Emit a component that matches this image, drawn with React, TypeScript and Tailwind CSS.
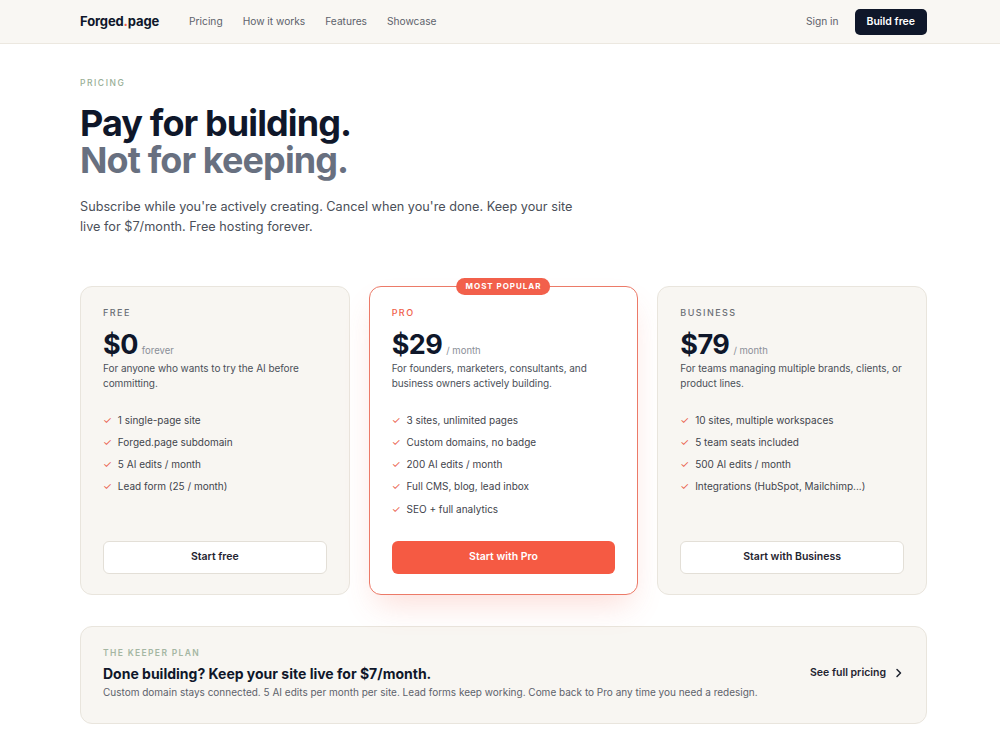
const FONT = "font-['Inter','Liberation_Sans',sans-serif]";

type Plan = {
  name: string;
  price: string;
  unit: string;
  desc: string;
  features: string[];
  cta: string;
  featured?: boolean;
};

const PLANS: Plan[] = [
  {
    name: "Free",
    price: "$0",
    unit: "forever",
    desc: "For anyone who wants to try the AI before committing.",
    features: ["1 single-page site", "Forged.page subdomain", "5 AI edits / month", "Lead form (25 / month)"],
    cta: "Start free",
  },
  {
    name: "Pro",
    price: "$29",
    unit: "/ month",
    desc: "For founders, marketers, consultants, and business owners actively building.",
    features: [
      "3 sites, unlimited pages",
      "Custom domains, no badge",
      "200 AI edits / month",
      "Full CMS, blog, lead inbox",
      "SEO + full analytics",
    ],
    cta: "Start with Pro",
    featured: true,
  },
  {
    name: "Business",
    price: "$79",
    unit: "/ month",
    desc: "For teams managing multiple brands, clients, or product lines.",
    features: [
      "10 sites, multiple workspaces",
      "5 team seats included",
      "500 AI edits / month",
      "Integrations (HubSpot, Mailchimp...)",
    ],
    cta: "Start with Business",
  },
];

function PlanCard({ plan }: { plan: Plan }) {
  const featured = plan.featured;
  return (
    <div
      className={[
        "relative flex flex-col rounded-[12px] border px-[22px] pt-[20px] pb-[20px]",
        featured
          ? "border-[#ec7a68] bg-white shadow-[0_16px_32px_-8px_rgba(240,96,74,0.22)]"
          : "border-[#e9e5dd] bg-[#f8f6f2]",
      ].join(" ")}
    >
      {featured && (
        <div className="absolute -top-[9px] left-1/2 -translate-x-1/2 rounded-full bg-[#f2604b] px-[9px] py-[3px] text-[8px] font-bold uppercase leading-[11px] tracking-[0.12em] text-white">
          Most popular
        </div>
      )}
      <div
        className={[
          "text-[9px] font-medium uppercase leading-[12px] tracking-[0.16em]",
          featured ? "text-[#f0604a]" : "text-[#6b6f76]",
        ].join(" ")}
      >
        {plan.name}
      </div>
      <div className="mt-[10px] flex items-baseline gap-[4px]">
        <span className="text-[27px] font-bold leading-[32px] tracking-[-0.02em] text-[#0f172a]">{plan.price}</span>
        <span className="text-[9.5px] text-[#8a8f98]">{plan.unit}</span>
      </div>
      <p className="-mr-[4px] text-[10px] leading-[15px] tracking-[-0.005em] text-[#4b5059]">{plan.desc}</p>
      <ul className="mt-[22px] flex flex-col gap-[7.2px]">
        {plan.features.map((f) => (
          <li key={f} className="flex items-center gap-[6px] text-[10px] leading-[15px] text-[#3f444c]">
            <span className="text-[10px] text-[#ea5b48]">✓</span>
            {f}
          </li>
        ))}
      </ul>
      <div className="mt-auto pt-[24px]">
        <button
          type="button"
          className={[
            "h-[33px] w-full rounded-[6px] text-[10.5px] font-semibold",
            featured
              ? "bg-[#f55a43] text-white"
              : "border border-[#e3dfd7] bg-white text-[#1f2430]",
          ].join(" ")}
        >
          {plan.cta}
        </button>
      </div>
    </div>
  );
}

export default function App() {
  return (
    <div className={`${FONT} min-h-screen bg-white`}>
      {/* Top nav */}
      <header className="flex h-[44px] items-center border-b border-[#ece8e0] bg-[#f9f7f3] pl-[80px] pr-[73px]">
        <div className="text-[13px] font-bold tracking-[-0.01em] text-[#0f172a]">
          Forged<span className="text-[#f0604a]">.</span>page
        </div>
        <nav className="ml-[30px] flex gap-[20px] text-[10.2px] text-[#5d626b]">
          <a href="#pricing">Pricing</a>
          <a href="#how">How it works</a>
          <a href="#features">Features</a>
          <a href="#showcase">Showcase</a>
        </nav>
        <div className="ml-auto flex items-center gap-[16px]">
          <a href="#signin" className="text-[10.2px] text-[#5d626b]">
            Sign in
          </a>
          <a
            href="#build"
            className="flex h-[26px] items-center rounded-[5px] bg-[#0f172a] px-[12px] text-[10.5px] font-semibold text-white"
          >
            Build free
          </a>
        </div>
      </header>

      <main className="pl-[80px] pr-[73px]">
        {/* Hero */}
        <section className="pt-[33px]">
          <div className="text-[8.5px] font-medium uppercase tracking-[0.18em] text-[#98ae96]">Pricing</div>
          <h1 className="mt-[15px] text-[36px] font-bold leading-[37px] tracking-[-0.025em] text-[#0f172a]">
            <span className="block">Pay for building.</span>
            <span className="block text-[#687080]">Not for keeping.</span>
          </h1>
          <p className="mt-[18px] max-w-[500px] text-[12.7px] leading-[20px] text-[#4b5059]">
            Subscribe while you're actively creating. Cancel when you're done. Keep your site live for $7/month. Free
            hosting forever.
          </p>
        </section>

        {/* Plans */}
        <section className="mt-[49px] grid grid-cols-3 gap-[19px]">
          {PLANS.map((p) => (
            <PlanCard key={p.name} plan={p} />
          ))}
        </section>

        {/* Keeper plan */}
        <section className="mt-[31px] flex items-center rounded-[12px] border border-[#e9e5dd] bg-[#f8f6f2] px-[22px] pt-[20px] pb-[24px]">
          <div className="flex-1">
            <div className="text-[8.5px] font-semibold uppercase tracking-[0.16em] text-[#a5b6a3]">The keeper plan</div>
            <div className="mt-[5px] text-[14px] font-bold leading-[20px] text-[#0f172a]">
              Done building? Keep your site live for $7/month.
            </div>
            <p className="mt-[1px] text-[10px] leading-[14px] text-[#5d626b]">
              Custom domain stays connected. 5 AI edits per month per site. Lead forms keep working. Come back to Pro any
              time you need a redesign.
            </p>
          </div>
          <a href="#full" className="flex items-center gap-[9px] pr-[1px] text-[10.5px] font-semibold text-[#1f2430]">
            See full pricing
            <svg width="8" height="10" viewBox="0 0 8 10" fill="none">
              <path d="M2 1.5L5.5 5 2 8.5" stroke="#1f2430" strokeWidth="1.5" strokeLinecap="round" strokeLinejoin="round" />
            </svg>
          </a>
        </section>
      </main>
    </div>
  );
}
